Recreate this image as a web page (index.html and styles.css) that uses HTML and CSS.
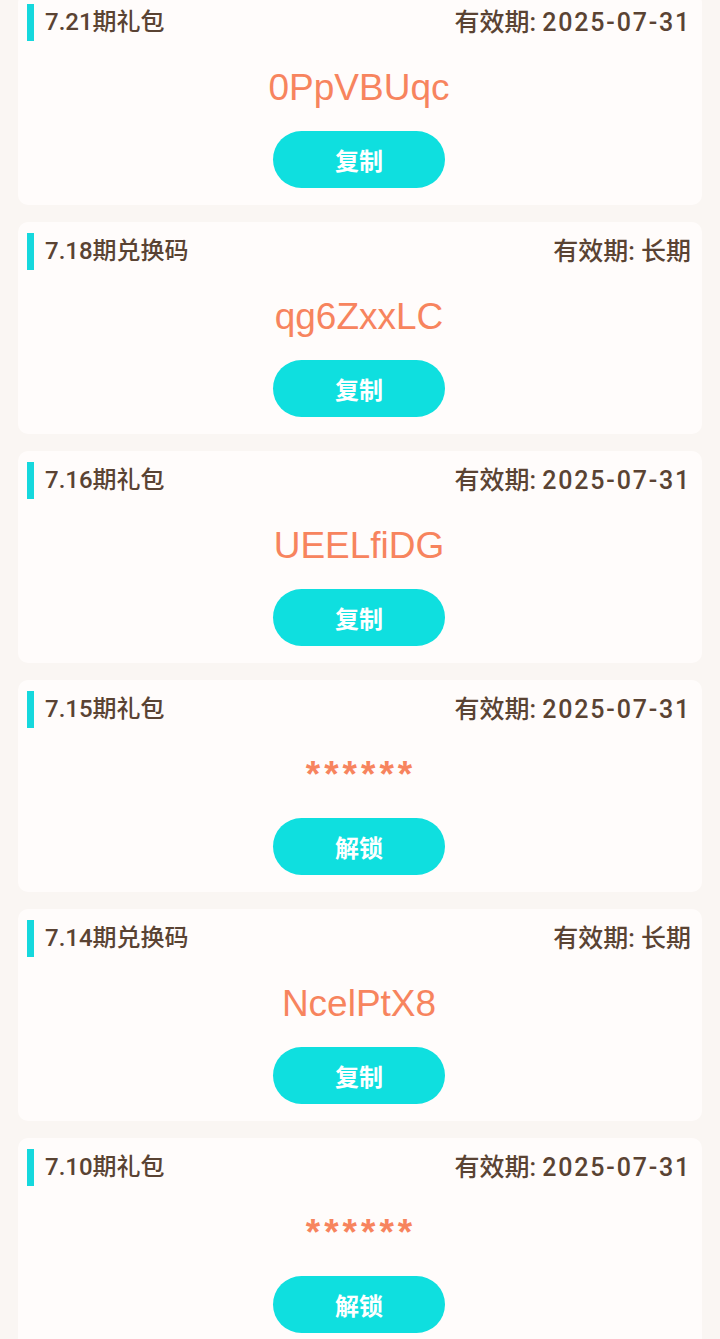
FILE: index.html
```html
<!DOCTYPE html>
<html>
<head>
    <meta charset="utf-8">
    <title>兑换码</title>
    <link rel="stylesheet" href="styles.css">
</head>
<body>
    <div class="list">
        <!-- 7.21 -->
        <div class="card">
            <div class="card-head">
                <div class="title">7.21期礼包</div>
                <div class="expire">有效期: <span class="date">2025-07-31</span></div>
            </div>
            <div class="code">0PpVBUqc</div>
            <button class="btn">复制</button>
        </div>

        <!-- 7.18 -->
        <div class="card">
            <div class="card-head">
                <div class="title">7.18期兑换码</div>
                <div class="expire">有效期: 长期</div>
            </div>
            <div class="code">qg6ZxxLC</div>
            <button class="btn">复制</button>
        </div>

        <!-- 7.16 -->
        <div class="card">
            <div class="card-head">
                <div class="title">7.16期礼包</div>
                <div class="expire">有效期: <span class="date">2025-07-31</span></div>
            </div>
            <div class="code">UEELfiDG</div>
            <button class="btn">复制</button>
        </div>

        <!-- 7.15 -->
        <div class="card">
            <div class="card-head">
                <div class="title">7.15期礼包</div>
                <div class="expire">有效期: <span class="date">2025-07-31</span></div>
            </div>
            <div class="code locked">******</div>
            <button class="btn">解锁</button>
        </div>

        <!-- 7.14 -->
        <div class="card">
            <div class="card-head">
                <div class="title">7.14期兑换码</div>
                <div class="expire">有效期: 长期</div>
            </div>
            <div class="code">NcelPtX8</div>
            <button class="btn">复制</button>
        </div>

        <!-- 7.10 -->
        <div class="card">
            <div class="card-head">
                <div class="title">7.10期礼包</div>
                <div class="expire">有效期: <span class="date">2025-07-31</span></div>
            </div>
            <div class="code locked">******</div>
            <button class="btn">解锁</button>
        </div>
    </div>
</body>
</html>
```

FILE: styles.css
```css
body {
    margin: 0;
    padding: 0;
    background-color: #faf6f3;
    font-family: Roboto, "Noto Sans CJK SC", sans-serif;
    color: #5a4333;
}
.list {
    margin-top: -7px;
}
.card {
    margin: 0 18px 17px;
    padding: 11px 11px 17px 9px;
    background-color: #fffcfb;
    border-radius: 10px;
    text-align: center;
}
.card-head {
    display: flex;
    justify-content: space-between;
    align-items: center;
    height: 37px;
    text-align: left;
}
.title {
    border-left: 7px solid #16d8dd;
    padding-left: 11px;
    line-height: 37px;
    font-size: 24px;
    font-weight: 500;
}
.expire {
    line-height: 37px;
    font-size: 25px;
    font-weight: 500;
}
.date {
    letter-spacing: 1.8px;
}
.code {
    margin-top: 27px;
    line-height: 40px;
    font-family: "Liberation Sans", "Noto Sans CJK SC", sans-serif;
    font-size: 37px;
    color: #f7845e;
}
.code.locked {
    font-weight: 700;
    font-size: 37px;
    letter-spacing: 4px;
    text-indent: 4px;
}
.btn {
    display: block;
    width: 172px;
    height: 57px;
    margin: 23px auto 0;
    border: none;
    border-radius: 29px;
    background-color: #0fdfdf;
    color: white;
    font-family: "Noto Sans CJK SC", sans-serif;
    font-size: 24px;
    font-weight: 700;
    cursor: pointer;
}
```
